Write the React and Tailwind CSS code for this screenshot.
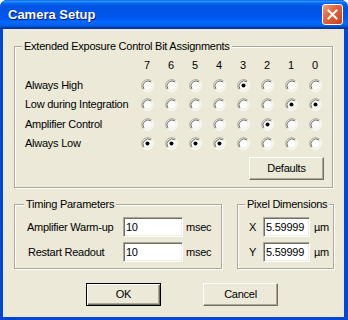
import React from "react";

const bits = [7, 6, 5, 4, 3, 2, 1, 0];

const rows = [
  { label: "Always High", on: [3] },
  { label: "Low during Integration", on: [1, 0] },
  { label: "Amplifier Control", on: [2] },
  { label: "Always Low", on: [7, 6, 5, 4] },
];

function Radio({ checked }) {
  return (
    <svg width="13" height="13" viewBox="0 0 13 13">
      <circle cx="6.5" cy="6.5" r="5" fill="#fff" />
      {/* outer ring: shadow top-left, highlight bottom-right */}
      <path d="M2.26 10.74 A6 6 0 0 1 10.74 2.26" fill="none" stroke="#ACA899" strokeWidth="1" />
      <path d="M10.74 2.26 A6 6 0 0 1 2.26 10.74" fill="none" stroke="#fff" strokeWidth="1" />
      {/* inner ring */}
      <path d="M3 10 A5 5 0 0 1 10 3" fill="none" stroke="#716F64" strokeWidth="1" />
      <path d="M10 3 A5 5 0 0 1 3 10" fill="none" stroke="#F1EFE2" strokeWidth="1" />
      {checked && <circle cx="6.5" cy="6.5" r="2" fill="#000" />}
    </svg>
  );
}

function Button({ children, isDefault }) {
  return (
    <button
      className={
        isDefault
          ? "w-[75px] h-[23px] border border-black bg-[#ECE9D8] shadow-[inset_1px_1px_0_#fff,inset_-1px_-1px_0_#716F64,inset_-2px_-2px_0_#ACA899] flex items-center justify-center"
          : "w-[75px] h-[23px] border border-t-white border-l-white border-r-[#716F64] border-b-[#716F64] bg-[#ECE9D8] shadow-[inset_-1px_-1px_0_#ACA899] flex items-center justify-center"
      }
    >
      {children}
    </button>
  );
}

function Field({ value, w }) {
  return (
    <input
      readOnly
      defaultValue={value}
      className={`${w} h-[20px] pl-[2px] bg-white border border-t-[#ACA899] border-l-[#ACA899] border-r-white border-b-white shadow-[inset_1px_1px_0_#716F64,inset_-1px_-1px_0_#F1EFE2] outline-none`}
    />
  );
}

function Group({ title, className, legendClass = "ml-[-3px]", children }) {
  return (
    <fieldset
      className={`border border-[#ACA899] shadow-[inset_1px_1px_0_#fff,1px_1px_0_#fff] ${className}`}
    >
      <legend className={`${legendClass} px-[2px] leading-[13px] whitespace-nowrap bg-[#ECE9D8]`}>{title}</legend>
      {children}
    </fieldset>
  );
}

export default function App() {
  return (
    <div className="w-[348px] h-[320px] flex flex-col bg-[#0047D6] rounded-t-[7px] overflow-hidden text-[11px] tracking-[-0.25px] text-black font-['Liberation_Sans',Arial,sans-serif]">
      {/* Title bar */}
      <div className="h-[29px] flex items-center justify-between pl-[8px] pr-[5px] bg-[linear-gradient(to_bottom,#0058ee_0%,#3593ff_4%,#288eff_6%,#127dff_8%,#036ffc_10%,#0262ee_14%,#0057e5_20%,#0054e3_24%,#0055eb_56%,#005bf5_66%,#026afe_76%,#0062ef_86%,#0052d6_92%,#0040ab_94%,#003092_100%)]">
        <span className="text-white font-bold text-[13px] tracking-normal [text-shadow:1px_1px_0_#0a1b7a]">Camera Setup</span>
        <div className="w-[21px] h-[21px] rounded-[3px] border border-white bg-[linear-gradient(135deg,#f0a080_0%,#e2663c_40%,#c9401a_100%)] flex items-center justify-center">
          <svg width="11" height="11" viewBox="0 0 11 11">
            <path d="M1.5 1.5 L9.5 9.5 M9.5 1.5 L1.5 9.5" stroke="#fff" strokeWidth="2" strokeLinecap="square" />
          </svg>
        </div>
      </div>

      {/* Client area */}
      <div className="flex-1 ml-[3px] mr-[4px] mb-[3px] bg-[#ECE9D8] flex flex-col">
        <Group
          title="Extended Exposure Control Bit Assignments"
          className="mt-[11px] ml-[11px] w-[319px] pl-[10px] pr-[8px] pt-[2px] pb-[7px]"
        >
          <div className="grid grid-cols-[110px_repeat(8,24px)] grid-rows-[20px_20px_19px_20px_19px] mr-[-4px]">
            <div />
            {bits.map((b) => (
              <div key={b} className="flex items-center justify-center">{b}</div>
            ))}
            {rows.map((r) => (
              <React.Fragment key={r.label}>
                <div className="flex items-center">{r.label}</div>
                {bits.map((b) => (
                  <div key={b} className="flex items-center justify-center">
                    <Radio checked={r.on.includes(b)} />
                  </div>
                ))}
              </React.Fragment>
            ))}
          </div>
          <div className="mt-[4px] flex justify-end">
            <Button>Defaults</Button>
          </div>
        </Group>

        <div className="mt-[10px] ml-[11px] flex items-start gap-[15px]">
          <Group title="Timing Parameters" className="w-[208px] pl-[12px] pt-[6px] pb-[6px]">
            <div className="flex flex-col gap-[5px]">
              <div className="flex items-center">
                <span className="w-[96px]">Amplifier Warm-up</span>
                <Field value="10" w="w-[60px]" />
                <span className="ml-[3px]">msec</span>
              </div>
              <div className="flex items-center">
                <span className="w-[96px] pl-[1px]">Restart Readout</span>
                <Field value="10" w="w-[60px]" />
                <span className="ml-[3px]">msec</span>
              </div>
            </div>
          </Group>
          <Group
            title="Pixel Dimensions"
            legendClass="ml-0"
            className="w-[97px] pl-[7px] pt-[6px] pb-[6px]"
          >
            <div className="flex flex-col gap-[5px] pl-[4px]">
              <div className="flex items-center">
                <span className="w-[14px]">X</span>
                <Field value="5.59999" w="w-[47px]" />
                <span className="ml-[4px]">µm</span>
              </div>
              <div className="flex items-center">
                <span className="w-[14px]">Y</span>
                <Field value="5.59999" w="w-[47px]" />
                <span className="ml-[4px]">µm</span>
              </div>
            </div>
          </Group>
        </div>

        <div className="mt-[14px] ml-[83px] flex gap-[42px]">
          <Button isDefault>OK</Button>
          <Button>Cancel</Button>
        </div>
      </div>
    </div>
  );
}
